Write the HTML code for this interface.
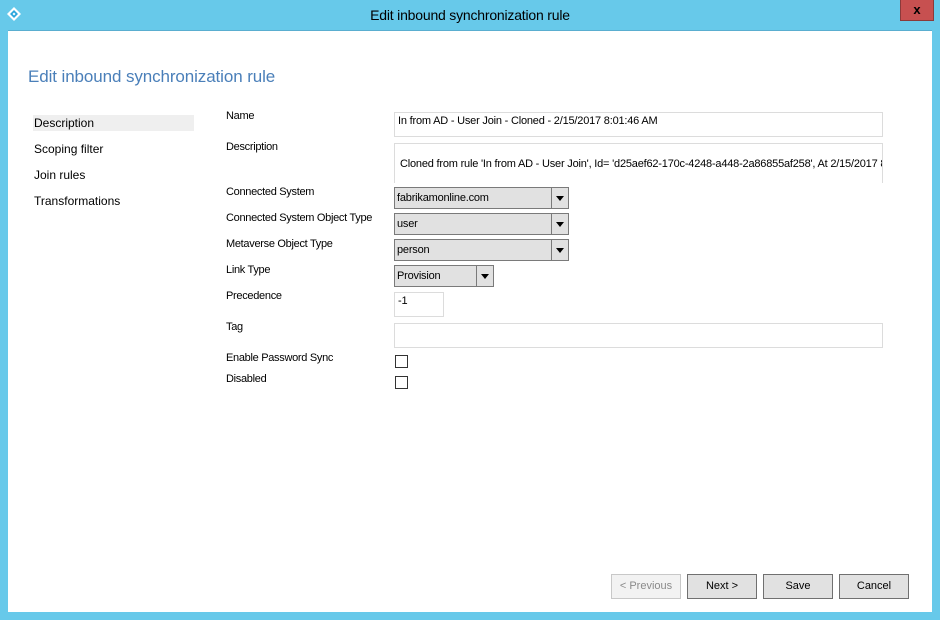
<!DOCTYPE html>
<html><head><style>
*{box-sizing:border-box;margin:0;padding:0}
body{width:940px;height:620px;background:#67c9ea;font-family:"Liberation Sans",sans-serif;font-size:12px;color:#000;position:relative;overflow:hidden}
.a{position:absolute}
.client{left:8px;top:30px;width:924px;height:582px;background:#fff;border-top:1px solid #5aaed0}
.lbl{font-size:11px;letter-spacing:-0.3px}
.tb{border:1px solid #dcdcdc;background:#fff;font-size:11px;letter-spacing:-0.2px;padding-left:3px;white-space:nowrap;overflow:hidden}
.dd{border:1px solid #7a7a7a;background:#e1e1e1;height:22px;font-size:11px;padding:4px 0 0 2px;letter-spacing:-0.2px}
.dd .ar{position:absolute;right:0;top:0;width:17px;height:20px;border-left:1px solid #7a7a7a}
.dd .ar:after{content:"";position:absolute;left:4px;top:8px;border-left:4px solid transparent;border-right:4px solid transparent;border-top:5px solid #000}
.cb{width:13px;height:13px;border:1px solid #333;background:#fff}
.btn{height:25px;border:1px solid #707070;background:#e1e1e1;text-align:center;font-size:11px;line-height:23px}
</style></head><body>
<svg class="a" style="left:6px;top:6px" width="16" height="16" viewBox="0 0 16 16"><path d="M8 1 L15 8 L8 15 L1 8Z" fill="#fff"/><path d="M8 4 L12 8 L8 12 L4 8Z" fill="#2aa6dc"/><path d="M8 6.5 L9.5 8 L8 9.5 L6.5 8Z" fill="#fff"/></svg>
<div class="a" style="left:0;top:7px;width:940px;text-align:center;font-size:14px;color:#000;letter-spacing:-0.2px">Edit inbound synchronization rule</div>
<div class="a" style="left:900px;top:0;width:34px;height:21px;background:#c75050;border:1px solid #8b3a3a;border-top:none;color:#000;text-align:center;font-weight:bold;font-size:13px;line-height:19px">x</div>
<div class="a client"></div>
<div class="a" style="left:28px;top:67px;font-size:17px;color:#4a7fb9;letter-spacing:-0.1px">Edit inbound synchronization rule</div>
<div class="a" style="left:33px;top:115px;width:161px;height:16px;background:#efefef"></div>
<div class="a" style="left:34px;top:116px">Description</div>
<div class="a" style="left:34px;top:142px">Scoping filter</div>
<div class="a" style="left:34px;top:168px">Join rules</div>
<div class="a" style="left:34px;top:194px">Transformations</div>

<div class="a lbl" style="left:226px;top:110px">Name</div>
<div class="a lbl" style="left:226px;top:141px">Description</div>
<div class="a lbl" style="left:226px;top:186px">Connected System</div>
<div class="a lbl" style="left:226px;top:212px">Connected System Object Type</div>
<div class="a lbl" style="left:226px;top:238px">Metaverse Object Type</div>
<div class="a lbl" style="left:226px;top:264px">Link Type</div>
<div class="a lbl" style="left:226px;top:290px">Precedence</div>
<div class="a lbl" style="left:226px;top:321px">Tag</div>
<div class="a lbl" style="left:226px;top:352px">Enable Password Sync</div>
<div class="a lbl" style="left:226px;top:373px">Disabled</div>

<div class="a tb" style="left:394px;top:112px;width:489px;height:25px;padding-top:2px">In from AD - User Join - Cloned - 2/15/2017 8:01:46 AM</div>
<div class="a tb" style="left:394px;top:143px;width:489px;height:40px;padding:14px 0 0 5px;border-bottom:none">Cloned from rule 'In from AD - User Join', Id= 'd25aef62-170c-4248-a448-2a86855af258', At 2/15/2017 8:01:46 AM</div>
<div class="a dd" style="left:394px;top:187px;width:175px">fabrikamonline.com<div class="ar"></div></div>
<div class="a dd" style="left:394px;top:213px;width:175px">user<div class="ar"></div></div>
<div class="a dd" style="left:394px;top:239px;width:175px">person<div class="ar"></div></div>
<div class="a dd" style="left:394px;top:265px;width:100px">Provision<div class="ar"></div></div>
<div class="a tb" style="left:394px;top:292px;width:50px;height:25px;padding-top:2px">-1</div>
<div class="a tb" style="left:394px;top:323px;width:489px;height:25px"></div>
<div class="a cb" style="left:395px;top:355px"></div>
<div class="a cb" style="left:395px;top:376px"></div>

<div class="a btn" style="left:611px;top:574px;width:70px;color:#8a8a8a;background:#f2f2f2;border-color:#c8c8c8">&lt; Previous</div>
<div class="a btn" style="left:687px;top:574px;width:70px">Next &gt;</div>
<div class="a btn" style="left:763px;top:574px;width:70px">Save</div>
<div class="a btn" style="left:839px;top:574px;width:70px">Cancel</div>
</body></html>
